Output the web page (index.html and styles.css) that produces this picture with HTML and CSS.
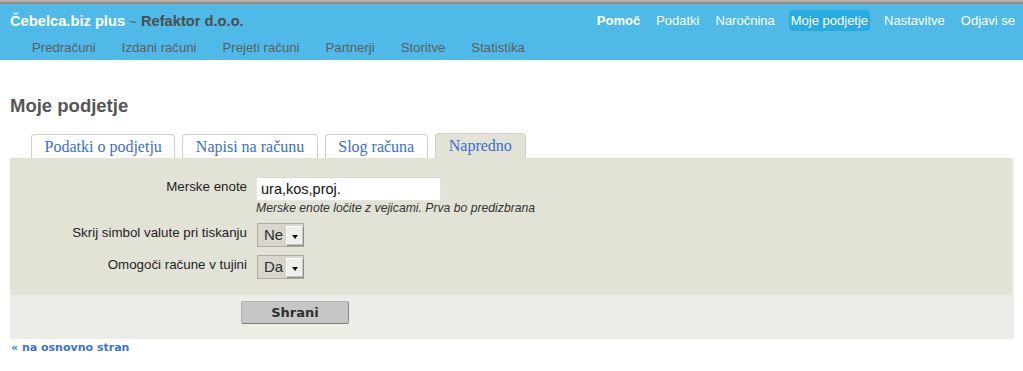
FILE: index.html
```html
<!DOCTYPE html>
<html lang="sl">
<head>
<meta charset="utf-8">
<title>Moje podjetje</title>
<link rel="stylesheet" href="styles.css">
</head>
<body>
<header class="topbar">
  <div class="bar-row">
    <div class="brand"><span class="brand-app">Čebelca.biz plus</span> <span class="brand-sep">~</span> <span class="brand-org">Refaktor d.o.o.</span></div>
    <nav class="user-nav">
      <a class="user-link strong" href="#">Pomoč</a>
      <a class="user-link" href="#">Podatki</a>
      <a class="user-link" href="#">Naročnina</a>
      <a class="user-link current" href="#">Moje podjetje</a>
      <a class="user-link" href="#">Nastavitve</a>
      <a class="user-link" href="#">Odjavi se</a>
    </nav>
  </div>
  <nav class="main-nav">
    <a class="main-link" href="#">Predračuni</a>
    <a class="main-link" href="#">Izdani računi</a>
    <a class="main-link" href="#">Prejeti računi</a>
    <a class="main-link" href="#">Partnerji</a>
    <a class="main-link" href="#">Storitve</a>
    <a class="main-link" href="#">Statistika</a>
  </nav>
</header>

<main class="content">
  <h1 class="page-title">Moje podjetje</h1>
  <div class="tabs">
    <a class="tab" href="#">Podatki o podjetju</a>
    <a class="tab" href="#">Napisi na računu</a>
    <a class="tab" href="#">Slog računa</a>
    <a class="tab active" href="#">Napredno</a>
  </div>
  <div class="panel">
    <div class="fields">
      <div class="label">Merske enote</div>
      <div class="field">
        <div class="text-input">ura,kos,proj.</div>
        <div class="help">Merske enote ločite z vejicami. Prva bo predizbrana</div>
      </div>
      <div class="label">Skrij simbol valute pri tiskanju</div>
      <div class="field">
        <div class="select"><span class="select-value">Ne</span><span class="select-btn"><span class="arrow"></span></span></div>
      </div>
      <div class="label">Omogoči račune v tujini</div>
      <div class="field">
        <div class="select"><span class="select-value">Da</span><span class="select-btn"><span class="arrow"></span></span></div>
      </div>
    </div>
    <div class="actions">
      <button class="save" type="button">Shrani</button>
    </div>
  </div>
  <a class="back" href="#">« na osnovno stran</a>
</main>
</body>
</html>
```

FILE: styles.css
```css
* { box-sizing: border-box; }

body {
  margin: 0;
  font-family: "Liberation Sans", Arial, sans-serif;
  font-size: 13px;
  color: #222;
  background: #fff;
}

a { text-decoration: none; }

.topbar {
  background: #4fbae8;
  border-top: 4px solid #9d958a;
  padding-top: 6px;
  height: 60px;
  position: relative;
}

.topbar::before {
  content: "";
  position: absolute;
  left: 0;
  right: 0;
  top: -4px;
  height: 4px;
  background: linear-gradient(#c2bbb0, #a69e93 50%, #857d73);
}

.bar-row {
  display: flex;
  justify-content: space-between;
  align-items: center;
  height: 21px;
  padding: 0 6px 0 10px;
}

.brand {
  font-size: 14.7px;
  font-weight: bold;
  line-height: 21px;
  white-space: nowrap;
  padding-top: 1px;
}

.brand-app { color: #fff; }
.brand-sep { color: #555; font-weight: normal; font-size: 13px; }
.brand-org { color: #4d4d4d; }

.user-nav {
  display: flex;
  align-items: center;
  gap: 12px;
}

.user-link {
  color: #fff;
  font-size: 13px;
  line-height: 15px;
  padding: 3px 2px;
  border-radius: 4px;
}

.user-link.strong { font-weight: bold; }
.user-link.current { background: #29abe2; }

.main-nav {
  display: flex;
  margin-top: 9px;
  padding-left: 19px;
  height: 16px;
}

.main-link {
  color: #5d5d5d;
  font-size: 13.2px;
  line-height: 16px;
  padding: 0 13px;
}

.content {
  padding: 0 9px 0 10px;
}

.page-title {
  margin: 35px 0 16px;
  font-size: 18.5px;
  line-height: 22px;
  color: #555;
  font-weight: bold;
}

.tabs {
  display: flex;
  gap: 7px;
  margin-left: 21px;
  align-items: flex-end;
}

.tab {
  display: block;
  font-family: "Liberation Serif", "Times New Roman", serif;
  font-size: 16px;
  line-height: 23px;
  color: #3a6fce;
  background: #fff;
  border: 1px solid #cfcfcb;
  border-bottom: none;
  border-radius: 4px 4px 0 0;
  padding: 0 12.5px;
}

.tab.active {
  background: #e3e2d7;
  padding: 0 13px;
  line-height: 24px;
}

.panel {
  background: #ededE8;
}

.fields {
  background: #e3e2d7;
  margin-right: 2px;
  display: grid;
  grid-template-columns: 237px 1fr;
  column-gap: 9px;
  row-gap: 8px;
  padding: 19px 0 16px;
}

.label {
  text-align: right;
  font-size: 13.33px;
  line-height: 16px;
  padding-top: 2px;
  color: #1e1e1e;
}

.field { display: flex; flex-direction: column; align-items: flex-start; }

.text-input {
  width: 185px;
  height: 24px;
  background: #fff;
  border: 1px solid #e6e6e2;
  border-top-color: #dadad5;
  font-size: 14.5px;
  line-height: 22px;
  padding-left: 4px;
  color: #111;
}

.help {
  margin-top: 0;
  font-size: 12.2px;
  line-height: 14px;
  font-style: italic;
  color: #333;
}

.select {
  display: flex;
  width: 47px;
  height: 24px;
  margin-left: 1px;
  background: #d8d5ce;
  border: 1px solid #aeaba3;
}

.select-value {
  font-size: 15px;
  line-height: 22px;
  padding-left: 6px;
  color: #2e2e2e;
  width: 28px;
}

.select-btn {
  margin: 2px 0 1px 0;
  width: 17px;
  height: 19px;
  background: #efefed;
  border: 1px solid #c9c7c0;
  border-top-color: #fff;
  border-left-color: #fff;
  box-shadow: 1px 1px 0 #8e8c86;
  display: flex;
  align-items: center;
  justify-content: center;
}

.arrow {
  width: 0;
  height: 0;
  border-left: 3px solid transparent;
  border-right: 3px solid transparent;
  border-top: 4px solid #111;
  margin-top: 2px;
}

.actions {
  padding: 6px 0 15px 231px;
  height: 44px;
}

.save {
  display: block;
  width: 108px;
  height: 23px;
  background: #c6c6c6;
  border: 1px solid #b3b3b3;
  border-right-color: #8a8a8a;
  border-bottom-color: #7a7a7a;
  border-radius: 2px;
  font-family: "DejaVu Sans", Verdana, sans-serif;
  font-weight: bold;
  font-size: 13px;
  color: #2e2e2e;
  padding: 0;
}

.back {
  display: inline-block;
  margin-top: 2px;
  margin-left: 1px;
  font-family: "DejaVu Sans", Verdana, sans-serif;
  font-weight: bold;
  font-size: 11px;
  line-height: 14px;
  color: #3a74d0;
}
```
